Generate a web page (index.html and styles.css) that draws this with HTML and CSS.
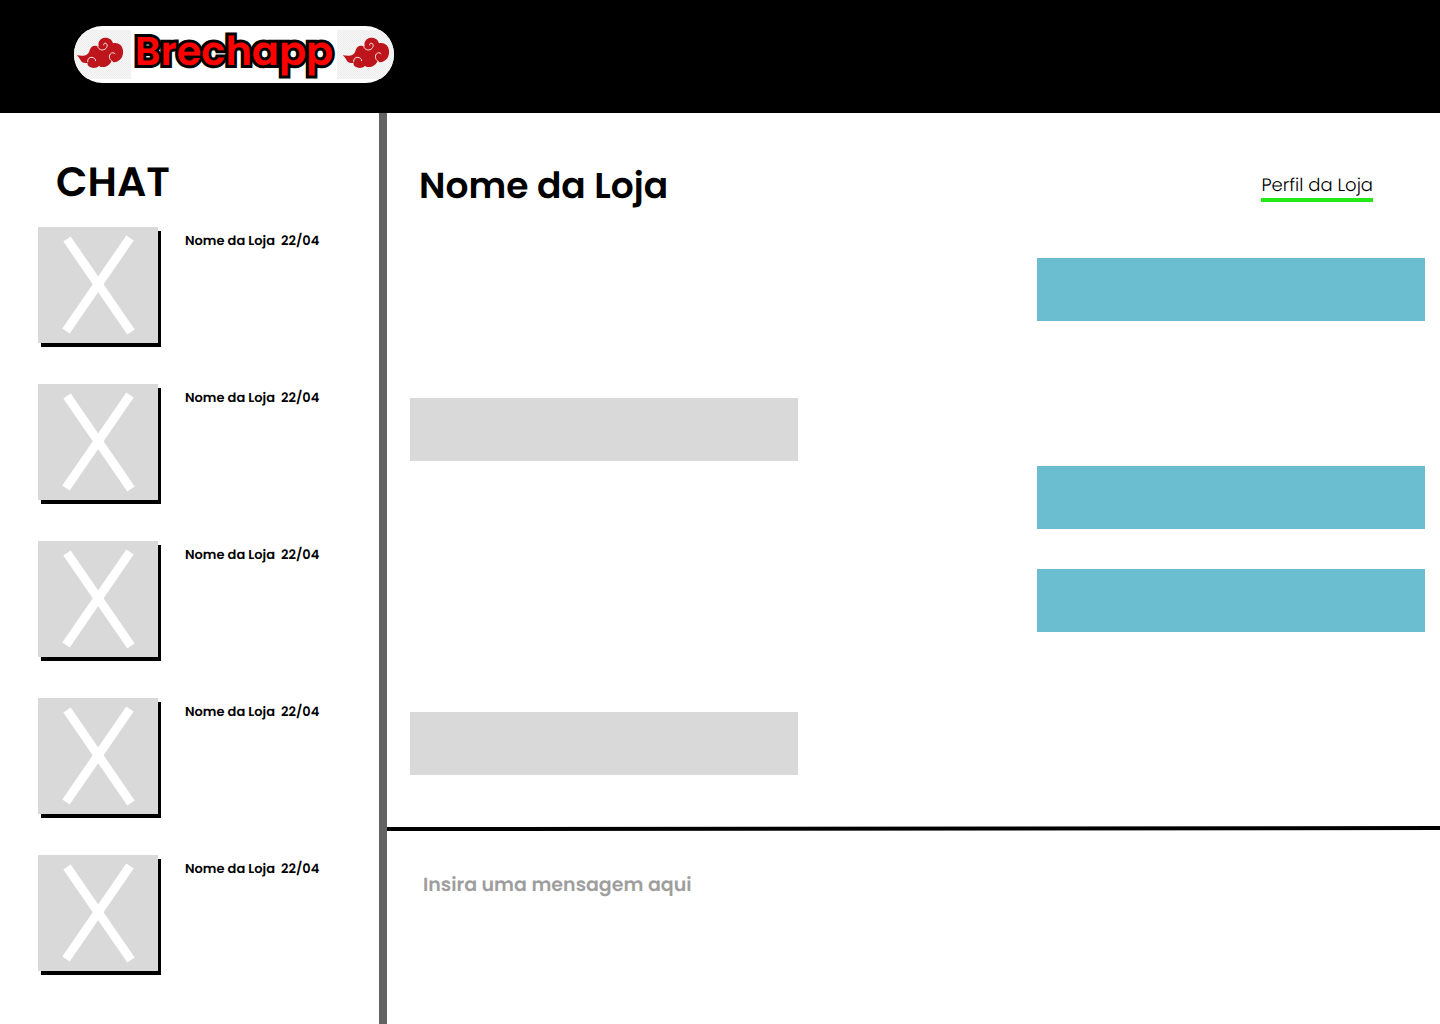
FILE: index.html
```html
<!DOCTYPE html>
<html lang="pt-BR">
<head>
<meta charset="utf-8">
<meta name="viewport" content="width=device-width, initial-scale=1">
<title>Brechapp - Chat</title>
<link rel="stylesheet" href="styles.css">
</head>
<body>
<svg class="defs" width="0" height="0" aria-hidden="true">
  <symbol id="cloud" viewBox="21 42 180 147">
    <path fill="#be141b" d="M38 118C49 119 60 121 68 116C76 112 76 103 80 96C85 88 96 88 104 91C101 80 107 69 118 66C131 62 144 69 147 82C162 78 175 88 177 103C179 121 170 136 152 139C147 139 144 138 142 136C138 147 127 155 114 153C110 153 107 151 105 149C100 155 89 158 80 154C72 151 69 145 71 140C60 143 53 139 49 131C46 126 43 122 38 118Z"/>
    <path fill="none" stroke="#f6e4e4" stroke-width="3" stroke-linecap="round" d="M101 90C102 99 111 104 120 101C129 98 133 86 126 82C122 80 118 83 119 87M71 137C70 129 76 123 84 124C91 125 96 130 95 134M147 138C137 133 133 122 139 114C143 109 150 109 153 113"/>
  </symbol>
  <symbol id="cross" viewBox="0 0 120 116">
    <path fill="none" stroke="#fff" stroke-width="9" d="M29 12L93 105M92 11L28 104"/>
  </symbol>
</svg>

<header class="topbar">
  <a class="logo" href="#" aria-label="Brechapp">
    <svg class="logo-cloud" aria-hidden="true"><use href="#cloud"/></svg>
    <span class="logo-name">Brechapp</span>
    <svg class="logo-cloud" aria-hidden="true"><use href="#cloud"/></svg>
  </a>
</header>

<div class="layout">
  <aside class="sidebar">
    <h1 class="sidebar-title">CHAT</h1>
    <ul class="chats">
      <li><a class="chat" href="#"><svg class="thumb" aria-hidden="true"><use href="#cross"/></svg><span class="chat-info"><span>Nome da Loja</span><time>22/04</time></span></a></li>
      <li><a class="chat" href="#"><svg class="thumb" aria-hidden="true"><use href="#cross"/></svg><span class="chat-info"><span>Nome da Loja</span><time>22/04</time></span></a></li>
      <li><a class="chat" href="#"><svg class="thumb" aria-hidden="true"><use href="#cross"/></svg><span class="chat-info"><span>Nome da Loja</span><time>22/04</time></span></a></li>
      <li><a class="chat" href="#"><svg class="thumb" aria-hidden="true"><use href="#cross"/></svg><span class="chat-info"><span>Nome da Loja</span><time>22/04</time></span></a></li>
      <li><a class="chat" href="#"><svg class="thumb" aria-hidden="true"><use href="#cross"/></svg><span class="chat-info"><span>Nome da Loja</span><time>22/04</time></span></a></li>
    </ul>
  </aside>

  <main class="conversation">
    <div class="conversation-head">
      <h2 class="store-name">Nome da Loja</h2>
      <a class="profile-link" href="#">Perfil da Loja</a>
    </div>
    <div class="messages">
      <div class="message sent"></div>
      <div class="message received after-long"></div>
      <div class="message sent after-short"></div>
      <div class="message sent after-medium"></div>
      <div class="message received after-longest"></div>
    </div>
    <form class="composer">
      <svg class="divider" viewBox="0 0 1053 5" preserveAspectRatio="none" aria-hidden="true"><path d="M0 1L1053 0V4L0 5Z"/></svg>
      <textarea class="composer-input" aria-label="Mensagem" placeholder="Insira uma mensagem aqui"></textarea>
    </form>
  </main>
</div>
</body>
</html>
```
FILE: styles.css
```css
* {
  box-sizing: border-box;
}

body {
  display: flex;
  flex-direction: column;
  min-height: 100vh;
  margin: 0;
  background: #fff;
  color: #000;
  font-family: Poppins, Inter, sans-serif;
  font-weight: 600;
  text-rendering: geometricPrecision;
}

a {
  color: inherit;
  text-decoration: none;
}

.defs {
  position: absolute;
}

.topbar {
  padding: 26px 74px 30px;
  background: #000;
}

.logo {
  display: flex;
  align-items: center;
  justify-content: space-between;
  width: 326px;
  height: 57px;
  margin-left: -3px;
  background: #fff;
  clip-path: inset(0 3px round 29px);
}

.logo-cloud {
  width: 60px;
  height: 49px;
  background: repeating-conic-gradient(#ececec 0 25%, #f8f8f8 0 50%) 0 0 / 2px 2px;
}

.logo-name {
  color: #f00;
  font-size: 40px;
  line-height: 48px;
  padding-bottom: 8px;
  -webkit-text-stroke: 6px #000;
  paint-order: stroke fill;
}

.layout {
  display: flex;
  flex: 1;
}

.sidebar {
  flex: 0 0 387px;
  padding: 46px 38px 48px;
  border-right: 8px solid #636363;
}

.sidebar-title {
  margin: 0 0 20px 18px;
  font-size: 41px;
  font-weight: 600;
  line-height: 48px;
}

.chats {
  display: flex;
  flex-direction: column;
  gap: 41px;
  margin: 0;
  padding: 0;
  list-style: none;
}

.chat {
  display: flex;
  gap: 27px;
}

.thumb {
  flex: none;
  width: 120px;
  height: 116px;
  background: #d9d9d9;
  box-shadow: 3px 4px #000;
}

.chat-info {
  display: flex;
  gap: 6px;
  padding-top: 4px;
  font-size: 13px;
  line-height: 20px;
  white-space: nowrap;
}

.conversation {
  display: flex;
  flex: 1;
  flex-direction: column;
  min-width: 0;
}

.conversation-head {
  display: flex;
  align-items: center;
  justify-content: space-between;
  padding: 49px 67px 0 32px;
}

.store-name {
  margin: 0;
  font-size: 36px;
  font-weight: 600;
  line-height: 48px;
}

.profile-link {
  padding-top: 4px;
  border-bottom: 4px solid #24e817;
  font-size: 18px;
  font-weight: 300;
  line-height: 24px;
}

.messages {
  display: flex;
  flex: 1;
  flex-direction: column;
  padding: 48px 15px 48px 23px;
}

.message {
  width: 388px;
  max-width: 80%;
  height: 63px;
}

.sent {
  align-self: flex-end;
  background: #6bbdd0;
}

.received {
  background: #d9d9d9;
}

.after-short {
  margin-top: 5px;
}

.after-medium {
  margin-top: 40px;
}

.after-long {
  margin-top: 77px;
}

.after-longest {
  margin-top: 80px;
}

.composer {
  display: flex;
  flex-direction: column;
  height: 198px;
}

.divider {
  width: 100%;
  height: 5px;
}

.composer-input {
  flex: 1;
  padding: 40px 36px;
  border: 0;
  outline: 0;
  resize: none;
  background: transparent;
  color: #000;
  font: inherit;
  font-size: 19px;
  line-height: 28px;
  text-rendering: inherit;
}

.composer-input::placeholder {
  color: #9e9e9e;
  opacity: 1;
}
```
